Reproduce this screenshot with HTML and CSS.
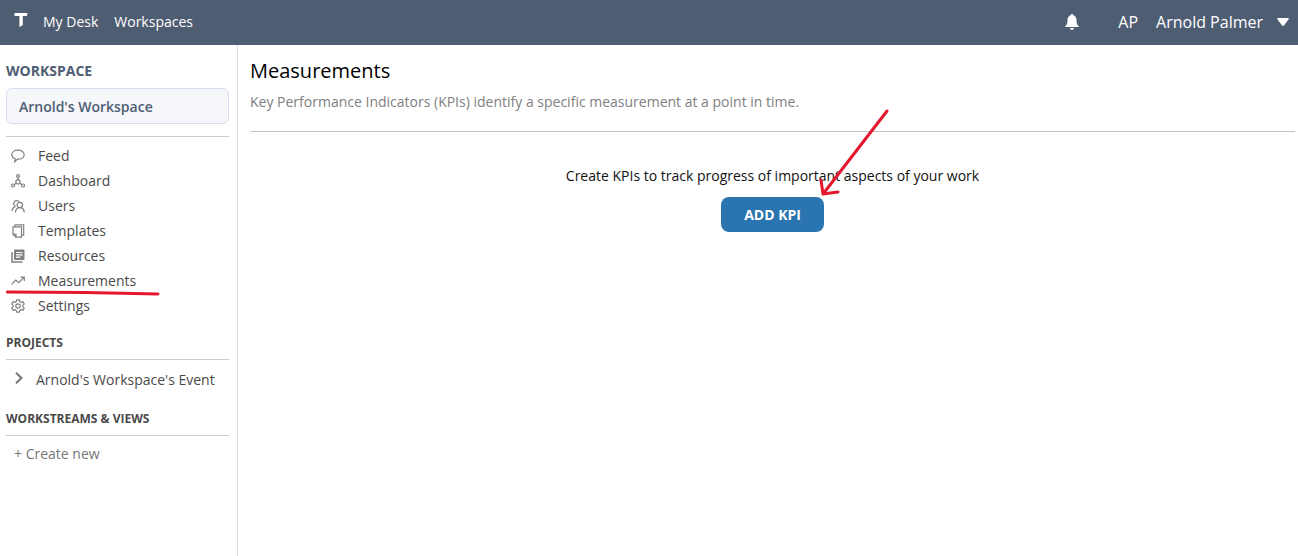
FILE: index.html
```html
<!DOCTYPE html>
<html lang="en">
<head>
<meta charset="utf-8">
<title>Measurements</title>
<link rel="stylesheet" href="styles.css">
</head>
<body>
<header class="topbar">
  <a class="logo" href="#" aria-label="Home">
    <svg width="14" height="14" viewBox="0 0 14 14" fill="#fff"><path d="M.5 0H13.500l-.5 3H8.800v9.200L5.400 14V3H.5z"/></svg>
  </a>
  <nav class="topnav">
    <a href="#">My Desk</a>
    <a href="#">Workspaces</a>
  </nav>
  <div class="account">
    <button class="bell" type="button" aria-label="Notifications">
      <svg width="14" height="16" viewBox="0 0 14 16" fill="#fff"><path d="M7 0c.8 0 1.300.5 1.300 1.200C10.400 1.800 11.500 3.600 11.500 6c0 3.500.6 5 2.300 6.200V13H.2v-.8C1.900 11 2.500 9.500 2.500 6c0-2.400 1.100-4.200 3.200-4.800C5.700.5 6.200 0 7 0zM5 14h4c0 1.200-.9 2-2 2s-2-.8-2-2z"/></svg>
    </button>
    <span class="initials">AP</span>
    <button class="user" type="button">Arnold Palmer
      <svg width="12" height="8" viewBox="0 0 12 8" fill="#fff"><path d="M1 0h10q1.300.2.6 1.300L7 7.400q-1 .9-2 0L.4 1.300Q-.3.2 1 0z"/></svg>
    </button>
  </div>
</header>
<div class="layout">
  <aside class="sidebar">
    <h2 class="workspace-label">WORKSPACE</h2>
    <button class="workspace-picker" type="button">Arnold's Workspace</button>
    <nav class="menu">
      <a href="#"><svg class="icon" viewBox="0 0 14 14"><path d="M7 1.200c3.500 0 6.200 1.900 6.200 4.500s-2.700 4.500-6.200 4.500h-.7L3.800 12.800 4.200 9.700C2.100 8.900.8 7.500.8 5.700.8 3.100 3.500 1.200 7 1.200z"/></svg>Feed</a>
      <a href="#"><svg class="icon" viewBox="0 0 14 14"><circle cx="7" cy="2" r="1.400"/><circle cx="7" cy="7.800" r="2.200"/><circle cx="2" cy="11.500" r="1.500"/><circle cx="12" cy="11.500" r="1.500"/><path d="M7 3.400v2.200M5.300 9.200l-2 1.400M8.700 9.200l2 1.400"/></svg>Dashboard</a>
      <a href="#"><svg class="icon" viewBox="0 0 14 14"><path d="M4.500 7.600A3.100 3.100 0 1 1 8.300 3M1 12c0-2.200 1-3.700 3.500-4.400"/><circle cx="8.800" cy="6" r="2.700"/><path d="M4.400 13.500c.2-3 1.800-4.800 4.400-4.800s4.200 1.800 4.500 4.800"/></svg>Users</a>
      <a href="#"><svg class="icon" viewBox="0 0 14 14"><path d="M4 2.600V.8h8.700v10.400H11M2 2.800h8.500v10.400H5L2 10.500zM2 10.300h3v2.900"/></svg>Templates</a>
      <a href="#"><svg class="icon" viewBox="0 0 14 14"><path d="M1 3v10h10.500" stroke-width="1.500"/><path class="solid" d="M4 .5h8.500q1 0 1 1V10q0 1-1 1H4q-1 0-1-1V1.500q0-1 1-1z"/><path class="light" d="M5 3.500h6.600M5 5.800h6.600M5 8.100h4.300"/></svg>Resources</a>
      <a class="current" href="#" aria-current="page"><svg class="icon" viewBox="0 0 14 14"><path d="M.6 10.300 4.800 6.100l2.900 2.600L12.700 3.600M9.500 3.200h3.800V7"/></svg>Measurements
        <svg class="underline-mark" width="156" height="8" viewBox="0 0 156 8"><path d="M2.500 3 80 3.500 153 5"/></svg></a>
      <a href="#"><svg class="icon" viewBox="0 0 14 14"><path d="M5.700.8h2.600l.5 1.800 1.200.7 1.900-.5 1.300 2.200L11.800 6.400v1.200l1.400 1.400-1.300 2.200-1.900-.5-1.200.7-.5 1.800H5.700l-.5-1.800-1.200-.7-1.900.5L.8 9l1.400-1.400V6.400L.8 5l1.300-2.200 1.900.5 1.200-.7z"/><circle cx="7" cy="7" r="2.200"/></svg>Settings</a>
    </nav>
    <h3 class="section-title">PROJECTS</h3>
    <a class="project" href="#"><svg width="8" height="12" viewBox="0 0 8 12"><path d="M1 .8 6.500 6 1 11.200"/></svg>Arnold's Workspace's Event</a>
    <h3 class="section-title">WORKSTREAMS &amp; VIEWS</h3>
    <button class="create" type="button">+ Create new</button>
  </aside>
  <main class="content">
    <div class="page-head">
      <h1>Measurements</h1>
      <p>Key Performance Indicators (KPIs) identify a specific measurement at a point in time.</p>
    </div>
    <section class="empty">
      <p>Create KPIs to track progress of important aspects of your work</p>
      <div class="action">
        <button class="add" type="button">ADD KPI</button>
        <svg class="arrow-mark" width="72" height="90" viewBox="0 0 72 90"><path d="M68 4 4 87M2 73l2 14 15-2"/></svg>
      </div>
    </section>
  </main>
</div>
</body>
</html>
```
FILE: styles.css
```css
* { box-sizing: border-box; }
body {
  margin: 0;
  min-height: 100vh;
  display: flex;
  flex-direction: column;
  background: #fff;
  color: #4a4a4a;
  font: 14px/20px "Open Sans", "Noto Sans", sans-serif;
}
a { color: inherit; text-decoration: none; }
button { font: inherit; color: inherit; border: 0; background: none; padding: 0; cursor: pointer; }
svg { display: block; flex: none; }
h1, h2, h3, p { margin: 0; }

.topbar {
  display: flex;
  align-items: center;
  height: 45px;
  padding: 0 9px 2px 14px;
  background: #4f5d73;
  color: #fff;
}
.logo { padding-bottom: 3px; }
.topnav { display: flex; gap: 16px; margin-left: 15px; }
.account { display: flex; align-items: center; margin-left: auto; font-size: 16px; }
.initials { margin-left: 39px; }
.user { display: flex; align-items: center; gap: 14px; margin-left: 18px; }

.layout { display: flex; flex: 1; }
.sidebar {
  width: 238px;
  flex: none;
  padding: 16px 8px 16px 6px;
  border-right: 1px solid #dfdfdf;
}
.workspace-label { font-size: 14px; font-weight: 700; color: #4f5d73; }
.workspace-picker {
  display: block;
  width: 100%;
  height: 36px;
  margin-top: 7px;
  padding: 2px 12px 0;
  border: 1px solid #d9dcef;
  border-radius: 6px;
  background: #f5f7fb;
  color: #4f5d73;
  font-weight: 600;
  text-align: left;
}
.menu { margin-top: 12px; padding-top: 6px; border-top: 1px solid #ccc; }
.menu a { position: relative; display: flex; align-items: center; gap: 13px; height: 25px; padding-left: 5px; }
.icon { width: 14px; height: 14px; fill: none; stroke: #808080; stroke-width: 1.2; }
.icon .solid { fill: #808080; stroke: none; }
.icon .light { stroke: #fff; }
.underline-mark { position: absolute; left: -1px; top: 21px; fill: none; stroke: #e5172f; stroke-width: 3; stroke-linecap: round; z-index: 1; }

.section-title {
  margin-top: 15px;
  padding-bottom: 6px;
  border-bottom: 1px solid #ccc;
  font-size: 12px;
  font-weight: 700;
}
.project { display: flex; align-items: center; gap: 13px; margin-top: 10px; padding-left: 9px; }
.project svg { margin-bottom: 5px; fill: none; stroke: #777; stroke-width: 2; }
.project + .section-title { margin-top: 19px; }
.create { display: block; margin-top: 8px; padding-left: 8px; color: #777; }

.content { flex: 1; min-width: 0; padding: 14px 3px 0 12px; }
.page-head { padding-bottom: 19px; border-bottom: 1px solid #c4c4c4; }
.page-head h1 { color: #000; font-size: 20px; font-weight: 400; line-height: 24px; }
.page-head p { margin-top: 9px; color: #808080; }
.empty { display: flex; flex-direction: column; align-items: center; padding-top: 34px; color: #111; }
.action { position: relative; margin-top: 11px; }
.add {
  display: block;
  height: 35px;
  padding: 0 23px;
  border-radius: 8px;
  background: #2a74b0;
  color: #fff;
  font-weight: 700;
}
.arrow-mark { position: absolute; right: -67px; bottom: 35px; fill: none; stroke: #e5172f; stroke-width: 3; stroke-linecap: round; stroke-linejoin: round; }
```
